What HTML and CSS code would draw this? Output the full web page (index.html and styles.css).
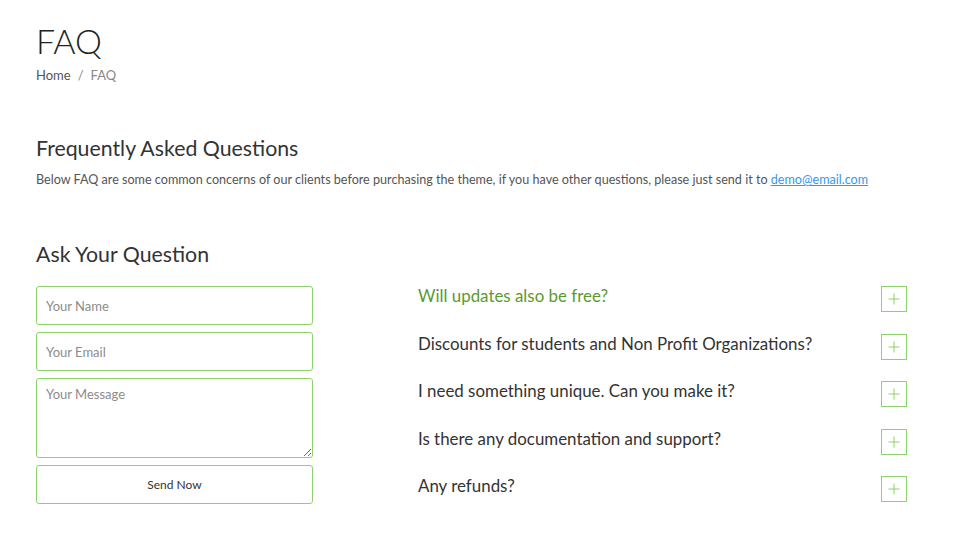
FILE: index.html
```html
<!DOCTYPE html>
<html>
<head>
<meta charset="utf-8">
<link rel="stylesheet" href="styles.css">
</head>
<body>
<div class="page">
  <header class="page-head">
    <h1 class="title">FAQ</h1>
    <nav class="crumbs"><a class="crumb-home" href="#">Home</a><span class="sep">/</span><span class="crumb-cur">FAQ</span></nav>
  </header>

  <section class="intro">
    <h2 class="h2">Frequently Asked Questions</h2>
    <p class="lead">Below FAQ are some common concerns of our clients before purchasing the theme, if you have other questions, please just send it to <a class="mail" href="#">demo@email.com</a></p>
  </section>

  <section class="main">
    <div class="ask">
      <h2 class="h2 ask-title">Ask Your Question</h2>
      <form class="form">
        <input class="field" type="text" placeholder="Your Name">
        <input class="field" type="text" placeholder="Your Email">
        <textarea class="field area" placeholder="Your Message"></textarea>
        <button class="send" type="button">Send Now</button>
      </form>
    </div>
    <ul class="faq">
      <li class="q active"><span class="q-text">Will updates also be free?</span><span class="plus"></span></li>
      <li class="q"><span class="q-text">Discounts for students and Non Profit Organizations?</span><span class="plus"></span></li>
      <li class="q"><span class="q-text">I need something unique. Can you make it?</span><span class="plus"></span></li>
      <li class="q"><span class="q-text">Is there any documentation and support?</span><span class="plus"></span></li>
      <li class="q"><span class="q-text">Any refunds?</span><span class="plus"></span></li>
    </ul>
  </section>
</div>
</body>
</html>
```

FILE: styles.css
```css
* { box-sizing: border-box; }
html, body { margin: 0; padding: 0; background: #fff; }
body {
  font-family: "Lato", "Open Sans", sans-serif;
  color: #333;
}
.page { padding: 20px 36px 0 36px; width: 960px; }

.title {
  margin: 0;
  font-weight: 300;
  font-size: 34px;
  line-height: 42px;
  color: #222;
}
.crumbs {
  margin-top: 5px;
  font-size: 13px;
  line-height: 16px;
  color: #888;
}
.crumb-home { color: #555; text-decoration: none; }
.sep { margin: 0 7px; color: #888; }

.intro { margin-top: 51px; }
.h2 {
  margin: 0;
  font-weight: 400;
  font-size: 21.3px;
  line-height: 28px;
  color: #333;
}
.lead {
  margin: 9px 0 0 0;
  font-size: 12.6px;
  line-height: 18px;
  color: #555;
}
.mail { color: #3a97e8; text-decoration: underline; }

.main {
  margin-top: 51px;
  display: flex;
  gap: 105px;
}
.ask { width: 277px; }
.ask-title { margin-bottom: 18px; }
.form { display: flex; flex-direction: column; gap: 7px; }
.field {
  width: 277px;
  height: 39px;
  border: 1.5px solid #8fd16a;
  border-radius: 3px;
  padding: 0 9px;
  font-family: inherit;
  font-size: 13px;
  color: #333;
  background: #fff;
  outline: none;
}
.field::placeholder { color: #8c8c8c; }
.area { height: 80px; padding-top: 7px; resize: vertical; }
.send {
  width: 277px;
  height: 39px;
  border: 1.5px solid #8fd16a;
  border-radius: 3px;
  background: #fff;
  font-family: inherit;
  font-size: 12px;
  color: #333;
}

.faq {
  list-style: none;
  margin: 0;
  padding: 0;
  padding-top: 46px;
  width: 489px;
}
.q {
  display: flex;
  justify-content: space-between;
  align-items: flex-start;
  height: 47.5px;
}
.q-text {
  font-size: 16.9px;
  line-height: 20px;
  color: #333;
}
.active .q-text { color: #5a9a2f; }
.plus {
  position: relative;
  margin-top: 0;
  width: 26px;
  height: 26px;
  border: 1.5px solid #8fd16a;
}
.plus::before, .plus::after {
  content: "";
  position: absolute;
  background: #8fd16a;
  left: 50%;
  top: 50%;
  transform: translate(-50%, -50%);
}
.plus::before { width: 11px; height: 1px; }
.plus::after { width: 1px; height: 11px; }
```
